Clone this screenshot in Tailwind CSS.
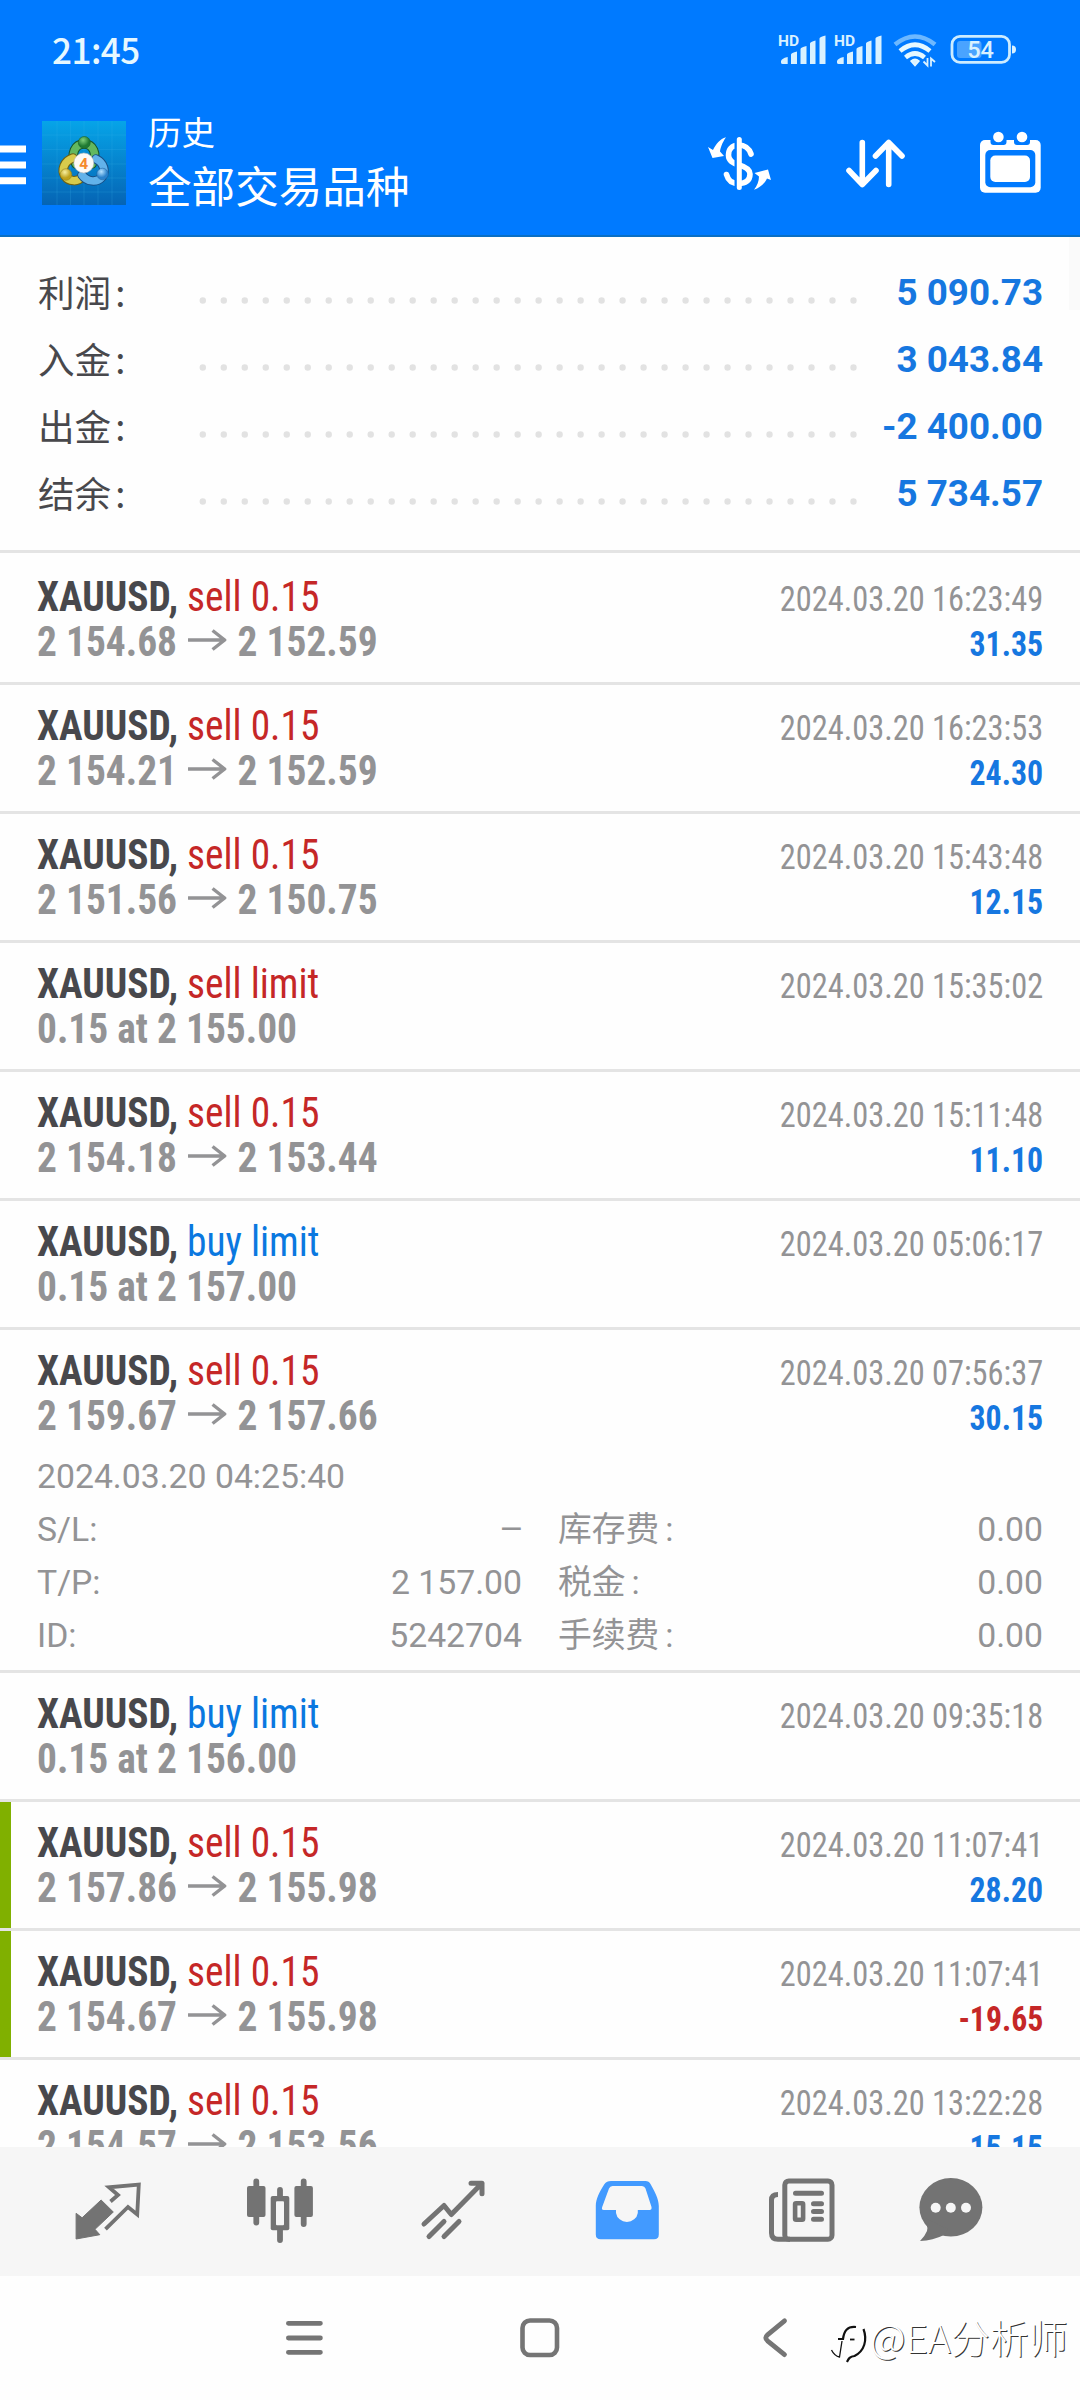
<!DOCTYPE html>
<html lang="zh-CN">
<head>
<meta charset="utf-8">
<title>历史</title>
<script src="https://cdn.jsdelivr.net/npm/@tailwindcss/browser@4"></script>
</head>
<body class="bg-[#fefefe] [font-family:Roboto,'Noto_Sans_CJK_SC',sans-serif]">
<div class="relative flex h-[2400px] w-[1080px] flex-col overflow-hidden">

  <!-- Header -->
  <header class="flex h-[237px] shrink-0 flex-col border-b-2 border-[#0a6fc4] bg-[#007aff] text-white">
    <div class="flex h-[100px] items-start justify-between pl-[52px] pr-[60px]">
      <span class="text-[35px] leading-[97px] font-medium tracking-[-0.5px] text-[#e6f8ff] [font-family:'Noto_Sans_CJK_SC',sans-serif]">21:45</span>
      <svg class="h-[100px] w-[244px]" viewBox="776 0 244 100" fill="#d9f1ff">
        <g id="sig">
          <text x="778" y="45.700" font-size="15.500" font-weight="700" font-family="Roboto">HD</text>
          <path d="M781 61.5q0-3 6.700-4.500v7h-5q-1.700 0-1.700-1.500zM791 54.500q0-1.500 6-3v12.500h-6zM800.500 49q0-1.500 6-3v18h-6zM810 43.500q0-1.500 5.500-3v23.500h-5.500zM819.500 38.500q0-1.500 6-3v28.500h-6z"/>
        </g>
        <use href="#sig" x="56"/>
        <g fill="none" stroke="#e6f8ff" stroke-width="4.600">
          <path d="M895 44.500Q915 28.500 935 44.500" stroke="#6db8ff"/>
          <path d="M900 51Q915 38.500 930 51"/>
          <path d="M905.500 57.500Q915 49.500 924.500 57.500"/>
        </g>
        <path d="M911 61q4-3.500 8 0l-4 4.500z" stroke="#e6f8ff" stroke-width="1.500"/>
        <path d="M923.500 61.500l4 4v-7.500M935 62l-4-3.500v8" fill="none" stroke="#d9f1ff" stroke-width="1.800"/>
        <rect x="957" y="41" width="24.500" height="17" rx="3" fill="#4aa3ff"/>
        <rect x="952" y="36.400" width="57.500" height="26" rx="8" fill="none" stroke="#cdecff" stroke-width="2.800"/>
        <path d="M1012 45.500q4 0 4 4t-4 4z"/>
        <text x="980.500" y="58" text-anchor="middle" font-size="23.500" font-weight="500" font-family="Roboto">54</text>
      </svg>
    </div>
    <div class="flex h-[135px]">
      <svg class="h-[137px] w-[26px] shrink-0" viewBox="0 100 26 137" fill="#fff"><path d="M0 145.500h26v7H0zM0 161.500h26v7H0zM0 177.300h26v7H0z"/></svg>
      <svg class="mt-[21px] ml-4 h-[84px] w-[84px] shrink-0" viewBox="0 0 84 84">
        <defs>
          <linearGradient id="bg" x1="0" y1="0" x2="0" y2="1"><stop offset="0" stop-color="#06a4e8"/><stop offset="1" stop-color="#0564b4"/></linearGradient>
          <radialGradient id="gr" cx=".4" cy=".3"><stop offset="0" stop-color="#7fd07a"/><stop offset="1" stop-color="#1f7a32"/></radialGradient>
          <radialGradient id="ye" cx=".4" cy=".3"><stop offset="0" stop-color="#f7efa0"/><stop offset="1" stop-color="#bfa21c"/></radialGradient>
          <radialGradient id="bl" cx=".4" cy=".3"><stop offset="0" stop-color="#b5e2ff"/><stop offset="1" stop-color="#2a82cc"/></radialGradient>
        </defs>
        <rect width="84" height="84" fill="url(#bg)"/>
        <path d="M15 0v84M28.500 0v84M42 0v84M56 0v84M70 0v84M0 14h84M0 28.500h84M0 43h84M0 57h84M0 71h84" stroke="#3db4ea" stroke-opacity=".2" stroke-width="1"/>
        <g fill="none" stroke-linecap="round">
          <path d="M34 43c-6-10-1-20 8-20s14 10 8 20" stroke="#17552a" stroke-width="9.500"/>
          <path d="M34 43c-6-10-1-20 8-20s14 10 8 20" stroke="#62b85f" stroke-width="7.500"/>
          <path d="M31 37c-9 3-12 12-8 18 4 6 13 6 17 1" stroke="#6e6214" stroke-width="9.500"/>
          <path d="M31 37c-9 3-12 12-8 18 4 6 13 6 17 1" stroke="#d8cb4c" stroke-width="7.500"/>
          <path d="M54 38c8 4 10 12 6 18-5 6-15 5-20-2" stroke="#174f86" stroke-width="9.500"/>
          <path d="M54 38c8 4 10 12 6 18-5 6-15 5-20-2" stroke="#62b2ea" stroke-width="7.500"/>
        </g>
        <circle cx="42.300" cy="21.500" r="6" fill="url(#gr)" stroke="#155f2c" stroke-width=".6"/>
        <circle cx="24" cy="53.500" r="5.800" fill="url(#ye)" stroke="#8a7818" stroke-width=".5"/>
        <circle cx="60.500" cy="53" r="5.800" fill="url(#bl)" stroke="#1d5f9c" stroke-width=".5"/>
        <circle cx="41.800" cy="42" r="10" fill="#fdfaf6" stroke="#bbb" stroke-width=".6"/>
        <text x="41.800" y="47.500" font-size="15.500" font-weight="700" text-anchor="middle" fill="#f58a2c" font-family="Roboto">4</text>
      </svg>
      <div class="ml-[22px] flex flex-col pt-[10px] [font-family:'Noto_Sans_CJK_SC',sans-serif]">
        <span class="text-[33.500px] leading-[42px]">历史</span>
        <span class="mt-[2px] text-[43.6px] leading-[60px]">全部交易品种</span>
      </div>
      <div class="ml-auto flex gap-[63px] pr-[34px]">
        <svg class="h-[137px] w-[72px]" viewBox="704 100 72 137" fill="none" stroke="#fff" stroke-linecap="round">
          <path d="M751 154C749 148 744 145 739 145C731.500 145 728.500 150 728.500 155C728.500 161 733 163 739 165C746 167 750 170 750 174C750 181 745 183.500 739 183.500C731 183.500 728 180 726.500 174.500" stroke-width="5.600"/>
          <path d="M735.800 140v48" stroke="#007aff" stroke-width="2.600"/>
          <path d="M739.300 139.500v48" stroke-width="5"/>
          <path d="M708 147l5 3C716 144 720 139 726 137.300C722 143 720.500 148 720 151.500l4 4.500-11.500 2zM771 180l-3-10.500-13.500 3.500 4.500 3.500C759 181 757 186 754 189.700C761 187 765 183 767 178.500z" fill="#fff" stroke="none"/>
        </svg>
        <svg class="h-[137px] w-[72px]" viewBox="839 100 72 137" fill="none" stroke="#fff" stroke-width="5.600" stroke-linecap="round" stroke-linejoin="round">
          <path d="M862.300 142.500v42M849 170.500l13.300 14 13.700-14M888.700 184.500v-42M875.500 156l13.200-13.500 13.300 13.500"/>
        </svg>
        <svg class="h-[137px] w-[72px]" viewBox="974 100 72 137" fill="#fff">
          <rect x="980" y="140" width="60.700" height="52.700" rx="5"/>
          <rect x="985.300" y="150" width="50" height="37.300" rx="5" fill="#007aff"/>
          <rect x="990.300" y="155.500" width="39.700" height="26.500" rx="5"/>
          <path d="M990.500 136h16v6q0 3-3 3h-10q-3 0-3-3zM1014 136h16v6q0 3-3 3h-10q-3 0-3-3z" fill="#007aff"/>
          <circle cx="998.400" cy="137" r="5.300"/><circle cx="1022" cy="137" r="5.300"/>
        </svg>
      </div>
    </div>
  </header>

  <!-- Account summary -->
  <section id="summary" class="flex h-[316px] shrink-0 flex-col border-b-3 border-[#e4e4e4] px-[37px] pt-[22px]"></section>

  <!-- Deals -->
  <main id="deals" class="flex min-h-0 flex-1 flex-col overflow-hidden"></main>

  <!-- Tabs -->
  <nav class="flex h-[129px] shrink-0 bg-[#f6f6f6] pl-[68px]">
    <svg class="h-[129px] w-[80px] shrink-0" viewBox="68 2147 80 129">
      <path d="M76.100 2213.300l6 4.500 19-17.800 12.200 12-18.300 17.300 4.800 5.400-23.700 4.300z" fill="#737373" stroke="#737373" stroke-linejoin="round"/>
      <path d="M110.500 2201.500l7.500-6.500-9-7.700 29.800-2.600-1.600 29.800-9.200-7.500-22.500 22.200" fill="none" stroke="#737373" stroke-width="3.800"/>
    </svg>
    <svg class="ml-[92px] h-[129px] w-[80px] shrink-0" viewBox="240 2147 80 129" fill="#737373">
      <path d="M256.300 2181.500v41M280 2190v50M303.700 2181.500v42.500" stroke="#737373" stroke-width="5.800" stroke-linecap="round"/>
      <rect x="247" y="2186" width="18.500" height="31" rx="2"/><rect x="294.400" y="2186" width="18.500" height="31" rx="2"/>
      <rect x="270.700" y="2196" width="18.600" height="34.300" rx="2"/><rect x="276" y="2201.300" width="8" height="24" rx="1" fill="#f6f6f6"/>
    </svg>
    <svg class="ml-[93px] h-[129px] w-[80px] shrink-0" viewBox="413 2147 80 129" fill="none" stroke="#737373" stroke-width="5" stroke-linecap="round" stroke-linejoin="round">
      <path d="M424 2224l20-18.500 7.300 9 30.700-31.200M471 2183.300h11v10.500M429 2236.500l15-15M444 2236.500l15-15"/>
    </svg>
    <svg class="ml-[94px] h-[129px] w-[80px] shrink-0" viewBox="587 2147 80 129">
      <path fill="#429aff" fill-rule="evenodd" d="M611 2181h34.500q3.500 0 5 3c4 7 8.300 15 8.300 22v28.500q0 4.800-4.800 4.800h-53.400q-4.800 0-4.800-4.800V2206c0-7 4-15 8.700-22q2-3 6.500-3zM612.500 2186q-2.500 0-3.500 2.500l-6.800 18.500q-1 3 1.500 3h12.300v3a11 10.300 0 0 0 21.800 0v-3h11.700q2.500 0 2-3l-6-18.500q-1-2.500-3.500-2.500z"/>
    </svg>
    <svg class="ml-[94px] h-[129px] w-[80px] shrink-0" viewBox="761 2147 80 129" fill="none" stroke="#737373" stroke-width="5">
      <rect x="784.800" y="2180.900" width="47.200" height="58.300" rx="4"/>
      <path d="M778 2194.500q-6.500 0-6.500 5.500v33q0 6.200 6.500 6.200h12"/>
      <path d="M795.500 2193.300h26M813.500 2203.700h8M813.500 2211.500h8M813.500 2219.300h8" stroke-linecap="round"/>
      <rect x="795.100" y="2203.300" width="8" height="16.400" rx="1" stroke-width="4.600"/>
    </svg>
    <svg class="ml-[70px] h-[129px] w-[80px] shrink-0" viewBox="911 2147 80 129" fill="#737373">
      <ellipse cx="950.900" cy="2207.300" rx="31.500" ry="29.200"/>
      <path d="M921 2216q8 9 6 15-2 5-7 10 13-.5 24-6l4-6z"/>
      <g fill="#f6f6f6"><circle cx="935.700" cy="2207.700" r="5"/><circle cx="950.800" cy="2207.700" r="5"/><circle cx="966" cy="2207.700" r="5"/></g>
    </svg>
  </nav>

  <!-- System navigation -->
  <footer class="flex h-[124px] shrink-0 items-start pl-[276px]">
    <svg class="h-[124px] w-[56px] shrink-0" viewBox="276 2276 56 124" stroke="#757575" stroke-width="4.800" stroke-linecap="round"><path d="M288.400 2323.300h32M288.400 2338h32M288.400 2352.300h32"/></svg>
    <svg class="ml-[180px] h-[124px] w-[56px] shrink-0" viewBox="512 2276 56 124" fill="none" stroke="#757575" stroke-width="4.600"><rect x="522.500" y="2320.500" width="34.500" height="34.500" rx="7.500"/></svg>
    <svg class="ml-[182px] h-[124px] w-[46px] shrink-0" viewBox="750 2276 46 124" fill="none" stroke="#757575" stroke-width="4.800" stroke-linecap="round"><path d="M784.500 2320.800l-17 14q-3.500 3 0 6l17 13.800"/></svg>
    <div class="ml-[32px] flex shrink-0 pt-[32px]">
      <svg class="h-[60px] w-[42px]" viewBox="828 2308 42 60" fill="none" stroke="#111"><path d="M856 2327c-9-1-12 4-13 12h-5" stroke-width="2.200"/><path d="M850 2339.500h4.500" stroke-width="1.800"/><path d="M863.500 2329c4 11 1 22-9 27-5 .5-6 3-7.500 6" stroke-width="2.200"/><path d="M842 2341l-2.500 16q-5-1-8-7" stroke-width="1.300"/></svg>
      <span class="text-[39px] leading-[56px] font-light whitespace-nowrap text-white [font-family:'Noto_Sans_CJK_SC',sans-serif] [text-shadow:1px_1px_0_#333]">@EA分析师</span>
    </div>
  </footer>

  <!-- Scroll thumb -->
  <div class="absolute top-[237px] right-0 h-[73px] w-[11px] bg-[#fafafa]"></div>
</div>

<script>
const summary = [['利润', '5 090.73'], ['入金', '3 043.84'], ['出金', '-2 400.00'], ['结余', '5 734.57']];
document.getElementById('summary').innerHTML = summary.map(([k, v]) => `
  <div class="flex h-[67px] items-start">
    <span class="w-[162px] pl-px text-[36.6px] leading-[65px] text-[#48484c] [font-family:'Noto_Sans_CJK_SC',sans-serif]">${k}<span class="ml-[4px]">:</span></span>
    <svg class="h-[67px] w-[659px]" viewBox="199 0 659 67"><path d="M202.800 41.500H854" stroke="#e2e2e2" stroke-width="6.400" stroke-linecap="round" stroke-dasharray="0 20.990"/></svg>
    <span class="ml-auto text-[36.8px] leading-[68px] font-bold text-[#1677e0]">${v}</span>
  </div>`).join('');

const deals = [
  ['sell 0.15', ['2 154.68', '2 152.59'], '16:23:49', '31.35'],
  ['sell 0.15', ['2 154.21', '2 152.59'], '16:23:53', '24.30'],
  ['sell 0.15', ['2 151.56', '2 150.75'], '15:43:48', '12.15'],
  ['sell limit', ['0.15 at 2 155.00'], '15:35:02', ''],
  ['sell 0.15', ['2 154.18', '2 153.44'], '15:11:48', '11.10'],
  ['buy limit', ['0.15 at 2 157.00'], '05:06:17', ''],
  ['sell 0.15', ['2 159.67', '2 157.66'], '07:56:37', '30.15', 'open'],
  ['buy limit', ['0.15 at 2 156.00'], '09:35:18', ''],
  ['sell 0.15', ['2 157.86', '2 155.98'], '11:07:41', '28.20', 'mark'],
  ['sell 0.15', ['2 154.67', '2 155.98'], '11:07:41', '-19.65', 'mark'],
  ['sell 0.15', ['2 154.57', '2 153.56'], '13:22:28', '15.15'],
];
const details = [
  ['S/L:', '<span class="inline-block origin-right scale-x-[0.85]">—</span>', '库存费', '0.00'],
  ['T/P:', '2 157.00', '税金', '0.00'],
  ['ID:', '5242704', '手续费', '0.00'],
];
const arrow = '<svg class="mx-[12px] inline-block h-[22px] w-[40.6px] align-[5px]" viewBox="0 0 38 22" preserveAspectRatio="none" fill="none" stroke="#939395" stroke-width="3.400"><path d="M0 11h36M24.500 1.500l12 9.500-12 9.500"/></svg>';
const detailHtml = `
  <div class="mt-[12px] text-[33.75px] leading-[53px] text-[#939395]">
    <div>2024.03.20 04:25:40</div>
    ${details.map(([a, b, c, d]) => `
    <div class="grid h-[53px] grid-cols-2 gap-x-[36px]">
      <div class="flex justify-between"><span>${a}</span><span>${b}</span></div>
      <div class="flex justify-between"><span>${c}<span class="ml-[6px]">:</span></span><span>${d}</span></div>
    </div>`).join('')}
  </div>`;
document.getElementById('deals').innerHTML = deals.map(([side, price, time, profit, flag], i) => `
  <div class="relative shrink-0 border-b-3 border-[#e4e4e4] px-[37px] ${i ? 'pt-[18px]' : 'pt-[21px]'} ${flag === 'open' ? 'h-[343px]' : i ? 'h-[129px]' : 'h-[132px]'}">
    ${flag === 'mark' ? '<div class="absolute top-0 left-0 h-[126px] w-[11px] bg-[#80b000]"></div>' : ''}
    <div class="flex h-[45px] items-baseline justify-between text-[42px] leading-[45px] [font-family:'Roboto_Condensed',Roboto,sans-serif]">
      <div class="origin-left scale-x-[0.938] whitespace-nowrap"><span class="font-bold text-[#48484c]">XAUUSD,</span> <span class="${side[0] === 's' ? 'text-[#c52727]' : 'text-[#0a78e0]'}">${side}</span></div>
      <div class="origin-right scale-x-[0.947] text-[34.2px] text-[#939395]">2024.03.20 ${time}</div>
    </div>
    <div class="flex h-[45px] items-baseline justify-between text-[42px] leading-[45px] font-bold text-[#939395] [font-family:'Roboto_Condensed',Roboto,sans-serif]">
      <div class="origin-left scale-x-[0.938] whitespace-nowrap">${price.join(arrow)}</div>
      <div class="origin-right scale-x-[0.93] text-[34.2px] ${profit[0] === '-' ? 'text-[#c52727]' : 'text-[#1677e0]'}">${profit}</div>
    </div>
    ${flag === 'open' ? detailHtml : ''}
  </div>`).join('');
</script>
</body>
</html>
